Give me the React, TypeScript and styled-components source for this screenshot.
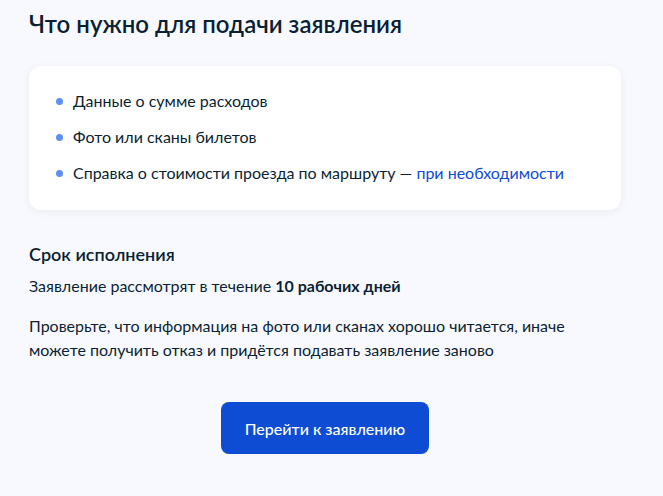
import React from "react";
import styled, { createGlobalStyle } from "styled-components";

const Global = createGlobalStyle`
  html, body { margin: 0; padding: 0; background: #f8f9fe; }
  body { font-family: Lato, "Noto Sans", sans-serif; color: #0b1f33; }
`;

const Page = styled.div`
  width: 592px;
  padding: 8px 0 40px 29px;
  display: flex;
  flex-direction: column;
`;

const Title = styled.h1`
  margin: 0;
  font-size: 24px;
  line-height: 32px;
  font-weight: 600;
`;

const Card = styled.div`
  margin-top: 26px;
  background: #fff;
  border-radius: 12px;
  box-shadow: 0 2px 8px rgba(11, 31, 51, 0.06);
  padding: 23px 24px 25px 24px;
`;

const List = styled.ul`
  margin: 0;
  padding: 0;
  list-style: none;
  display: flex;
  flex-direction: column;
  gap: 12px;
`;

const Item = styled.li`
  display: flex;
  align-items: center;
  gap: 10px;
  font-size: 16px;
  line-height: 24px;
  &::before {
    content: "";
    width: 7px;
    height: 7px;
    border-radius: 50%;
    background: #5e8ef3;
    flex: none;
    margin-left: 3px;
  }
`;

const Link = styled.a`
  color: #0d4cd3;
  text-decoration: none;
`;

const Subtitle = styled.h2`
  margin: 32px 0 0;
  font-size: 18px;
  line-height: 24px;
  font-weight: 600;
`;

const Text = styled.p<{ $top: number }>`
  margin: ${(p) => p.$top}px 0 0;
  font-size: 16px;
  line-height: 24px;
`;

const ButtonRow = styled.div`
  display: flex;
  justify-content: center;
  margin-top: 40px;
`;

const Button = styled.button`
  width: 208px;
  height: 52px;
  border: none;
  border-radius: 8px;
  background: #0d4cd3;
  color: #fff;
  font-family: Lato, "Noto Sans", sans-serif;
  font-size: 16px;
  font-weight: 500;
  cursor: pointer;
`;

export default function App() {
  return (
    <>
      <Global />
      <Page>
        <Title>Что нужно для подачи заявления</Title>
        <Card>
          <List>
            <Item>Данные о сумме расходов</Item>
            <Item>Фото или сканы билетов</Item>
            <Item>
              <span>
                Справка о стоимости проезда по маршруту —{" "}
                <Link href="#">при необходимости</Link>
              </span>
            </Item>
          </List>
        </Card>
        <Subtitle>Срок исполнения</Subtitle>
        <Text $top={8}>
          Заявление рассмотрят в течение <b>10 рабочих дней</b>
        </Text>
        <Text $top={16}>
          Проверьте, что информация на фото или сканах хорошо читается, иначе
          <br />
          можете получить отказ и придётся подавать заявление заново
        </Text>
        <ButtonRow>
          <Button>Перейти к заявлению</Button>
        </ButtonRow>
      </Page>
    </>
  );
}
